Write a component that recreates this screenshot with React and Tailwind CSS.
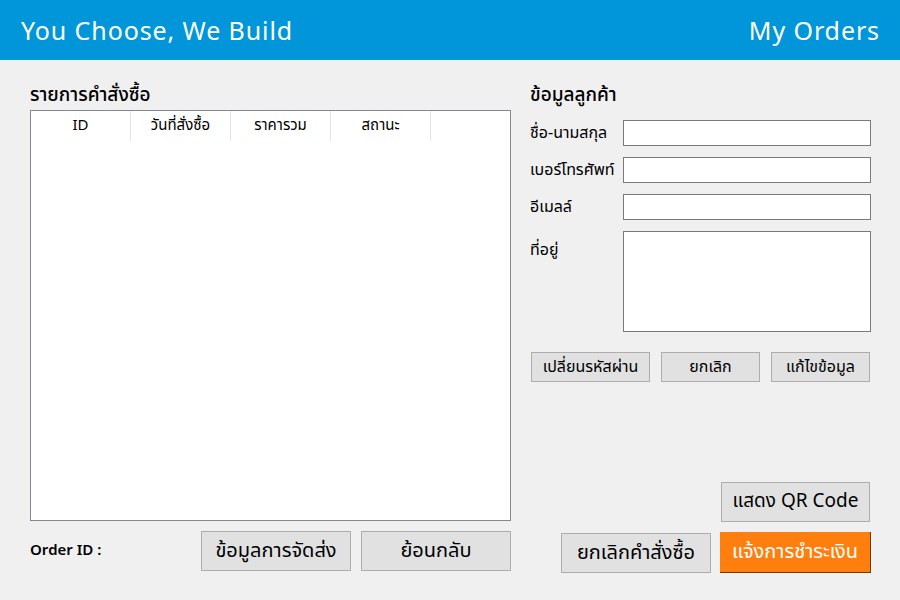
import React from 'react';

const font = { fontFamily: '"Leelawadee UI", "Noto Sans Thai", "Noto Sans", "DejaVu Sans", sans-serif' };

const columns = ['ID', 'วันที่สั่งซื้อ', 'ราคารวม', 'สถานะ'];

const fields = [
  { label: 'ชื่อ-นามสกุล' },
  { label: 'เบอร์โทรศัพท์' },
  { label: 'อีเมลล์' },
];

function GrayButton({ children, className = '' }) {
  return (
    <button className={`bg-[#e1e1e1] border border-[#adadad] text-black flex items-center justify-center ${className}`}>
      {children}
    </button>
  );
}

export default function App() {
  return (
    <div className="w-[900px] h-[600px] bg-[#f0f0f0] text-black overflow-hidden" style={font}>
      <div className="h-[60px] bg-[#0096d9] flex items-center justify-between pl-[21px] pr-[20px] text-white text-[25px] leading-none pt-[4px]">
        <span className="tracking-[0.9px]">You Choose, We Build</span>
        <span className="tracking-[0.9px]">My Orders</span>
      </div>

      <div className="flex pl-[30px] pt-[24px]">
        <div className="w-[481px] flex flex-col">
          <div className="h-[26px] text-[19px] leading-[24px] font-medium">รายการคำสั่งซื้อ</div>
          <div className="h-[411px] bg-white border border-[#828790]">
            <div className="flex h-[30px]">
              {columns.map((c) => (
                <div key={c} className="w-[100px] border-r border-[#e5e5e5] flex items-center justify-center text-[15px]">
                  {c}
                </div>
              ))}
            </div>
          </div>
          <div className="flex items-center mt-[10px] h-[40px]">
            <span className="text-[15px] font-semibold w-[171px]">Order ID :</span>
            <GrayButton className="w-[150px] h-[40px] text-[20px]">ข้อมูลการจัดส่ง</GrayButton>
            <GrayButton className="w-[150px] h-[40px] text-[20px] ml-[10px]">ย้อนกลับ</GrayButton>
          </div>
        </div>

        <div className="w-[341px] ml-[19px] flex flex-col">
          <div className="h-[24px] text-[19px] leading-[24px] font-medium">ข้อมูลลูกค้า</div>
          <div className="flex flex-col gap-[11px] mt-[12px]">
            {fields.map((f) => (
              <div key={f.label} className="flex items-center h-[26px]">
                <span className="w-[93px] text-[16px] whitespace-nowrap">{f.label}</span>
                <div className="w-[248px] h-[26px] bg-white border border-[#7a7a7a]" />
              </div>
            ))}
            <div className="flex">
              <span className="w-[93px] text-[16px] pt-[7px]">ที่อยู่</span>
              <div className="w-[248px] h-[101px] bg-white border border-[#7a7a7a]" />
            </div>
          </div>
          <div className="flex mt-[20px] pl-[1px]">
            <GrayButton className="w-[119px] h-[30px] text-[16px]">เปลี่ยนรหัสผ่าน</GrayButton>
            <GrayButton className="w-[99px] h-[30px] text-[16px] ml-[11px]">ยกเลิก</GrayButton>
            <GrayButton className="w-[99px] h-[30px] text-[16px] ml-[11px]">แก้ไขข้อมูล</GrayButton>
          </div>
          <div className="flex justify-end mt-[100px] pr-[1px]">
            <GrayButton className="w-[149px] h-[40px] text-[19px]">แสดง QR Code</GrayButton>
          </div>
          <div className="flex justify-end items-start mt-[10px]">
            <GrayButton className="w-[150px] h-[40px] text-[20px] mt-[1px]">ยกเลิกคำสั่งซื้อ</GrayButton>
            <button className="w-[151px] h-[41px] ml-[9px] bg-[#ff7f0e] text-white text-[20px] border-r border-b border-[#6b3a0a] flex items-center justify-center">
              แจ้งการชำระเงิน
            </button>
          </div>
        </div>
      </div>
    </div>
  );
}
